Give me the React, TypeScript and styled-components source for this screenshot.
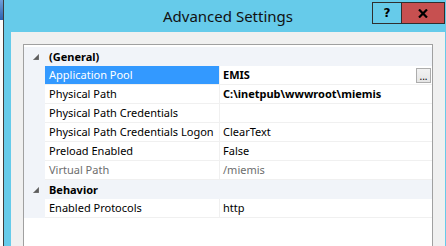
import React from "react";
import styled, { createGlobalStyle } from "styled-components";

const GlobalStyle = createGlobalStyle`
  * { box-sizing: border-box; }
  body {
    margin: 0;
    font-family: "Noto Sans", "Open Sans", sans-serif;
  }
`;

const Screen = styled.div`
  width: 446px;
  height: 246px;
  overflow: hidden;
  display: flex;
  background: #ffffff;
`;

const Backdrop = styled.div`
  width: 3px;
  flex-shrink: 0;
  display: flex;
  flex-direction: column;
  background: #fbfbfb;
`;

const BackdropIcon = styled.div`
  height: 20px;
  background: linear-gradient(180deg, #6f9fd8, #2e62b0);
`;

const Window = styled.div`
  flex-shrink: 0;
  width: 450px;
  height: 290px;
  border-left: 1px solid #3c3c3c;
  border-right: 1px solid #3c3c3c;
  background: #66cbea;
  padding: 0 7px;
  display: flex;
  flex-direction: column;
`;

const TitleBar = styled.div`
  height: 32px;
  display: grid;
  grid-template-columns: 1fr auto 1fr;
  align-items: start;
`;

const Title = styled.div`
  grid-column: 2;
  margin-top: 6px;
  font-size: 15px;
  line-height: 20px;
  color: #111;
  white-space: nowrap;
`;

const CaptionButtons = styled.div`
  grid-column: 3;
  justify-self: end;
  display: flex;
  margin-top: 2px;
`;

const CaptionButton = styled.div<{ $close?: boolean }>`
  width: ${(p) => (p.$close ? 44 : 29)}px;
  height: 22px;
  border: 1px solid #2f2f2f;
  border-right-width: ${(p) => (p.$close ? 1 : 0)}px;
  background: ${(p) => (p.$close ? "#c75050" : "transparent")};
  display: flex;
  align-items: center;
  justify-content: center;
  font-family: "DejaVu Sans", sans-serif;
  font-weight: bold;
  font-size: 12px;
  color: #000;
`;

const ClientArea = styled.div`
  flex: 1;
  background: #f0f0f0;
  padding: 12px 12px 0;
  display: flex;
  flex-direction: column;
`;

const Grid = styled.div`
  flex: 1;
  border: 1px solid #a0a0a0;
  background: #ffffff;
  padding-top: 2px;
  font-size: 11px;
`;

const Row = styled.div<{ $category?: boolean }>`
  display: grid;
  grid-template-columns: 21px 175px 1fr;
  height: 19px;
  background: ${(p) => (p.$category ? "#f1f4f9" : "#ffffff")};
`;

const Margin = styled.div`
  background: #f1f4f9;
  display: flex;
  align-items: center;
  justify-content: center;
  padding-left: 2px;
`;

const CategoryLabel = styled.div`
  grid-column: 2 / 4;
  padding-left: 4px;
  line-height: 19px;
  font-weight: bold;
  color: #000;
`;

const NameCell = styled.div<{ $selected?: boolean; $disabled?: boolean }>`
  padding-left: 4px;
  line-height: 18px;
  white-space: nowrap;
  overflow: hidden;
  border-right: 1px solid #f0f0f0;
  border-bottom: 1px solid #f0f0f0;
  background: ${(p) => (p.$selected ? "#3399ff" : "transparent")};
  color: ${(p) => (p.$selected ? "#ffffff" : p.$disabled ? "#6d6d6d" : "#000")};
`;

const ValueCell = styled.div<{ $bold?: boolean; $disabled?: boolean }>`
  display: flex;
  align-items: center;
  padding-left: 3px;
  padding-right: 1px;
  line-height: 18px;
  white-space: nowrap;
  border-bottom: 1px solid #f0f0f0;
  font-weight: ${(p) => (p.$bold ? "bold" : "normal")};
  color: ${(p) => (p.$disabled ? "#6d6d6d" : "#000")};
`;

const ValueText = styled.span`
  flex: 1;
`;

const EllipsisButton = styled.div`
  width: 15px;
  height: 15px;
  border: 1px solid #adadad;
  background: linear-gradient(180deg, #f2f2f2, #e5e5e5);
  font-size: 10px;
  line-height: 14px;
  font-weight: normal;
  text-align: center;
  color: #000;
`;

const Expander = () => (
  <svg width="6" height="6" viewBox="0 0 6 6">
    <polygon points="6,0 6,6 0,6" fill="#5d5d5d" stroke="#9a9a9a" strokeWidth="0.5" />
  </svg>
);

const CloseGlyph = () => (
  <svg width="10" height="9" viewBox="0 0 10 9">
    <path d="M1 0.5 L9 8.5 M9 0.5 L1 8.5" stroke="#000" strokeWidth="2.2" />
  </svg>
);

type Property = {
  name: string;
  value: string;
  bold?: boolean;
  selected?: boolean;
  disabled?: boolean;
  browse?: boolean;
};

type Category = { title: string; items: Property[] };

const CATEGORIES: Category[] = [
  {
    title: "(General)",
    items: [
      { name: "Application Pool", value: "EMIS", bold: true, selected: true, browse: true },
      { name: "Physical Path", value: "C:\\inetpub\\wwwroot\\miemis", bold: true },
      { name: "Physical Path Credentials", value: "" },
      { name: "Physical Path Credentials Logon", value: "ClearText" },
      { name: "Preload Enabled", value: "False" },
      { name: "Virtual Path", value: "/miemis", disabled: true },
    ],
  },
  {
    title: "Behavior",
    items: [{ name: "Enabled Protocols", value: "http" }],
  },
];

const App = () => {
  return (
    <Screen>
      <GlobalStyle />
      <Backdrop>
        <BackdropIcon />
      </Backdrop>
      <Window>
        <TitleBar>
          <Title>Advanced Settings</Title>
          <CaptionButtons>
            <CaptionButton>?</CaptionButton>
            <CaptionButton $close>
              <CloseGlyph />
            </CaptionButton>
          </CaptionButtons>
        </TitleBar>
        <ClientArea>
          <Grid>
            {CATEGORIES.map((cat) => (
              <React.Fragment key={cat.title}>
                <Row $category>
                  <Margin>
                    <Expander />
                  </Margin>
                  <CategoryLabel>{cat.title}</CategoryLabel>
                </Row>
                {cat.items.map((item) => (
                  <Row key={item.name}>
                    <Margin />
                    <NameCell $selected={item.selected} $disabled={item.disabled}>
                      {item.name}
                    </NameCell>
                    <ValueCell $bold={item.bold} $disabled={item.disabled}>
                      <ValueText>{item.value}</ValueText>
                      {item.browse && <EllipsisButton>...</EllipsisButton>}
                    </ValueCell>
                  </Row>
                ))}
              </React.Fragment>
            ))}
          </Grid>
        </ClientArea>
      </Window>
    </Screen>
  );
};

export default App;
